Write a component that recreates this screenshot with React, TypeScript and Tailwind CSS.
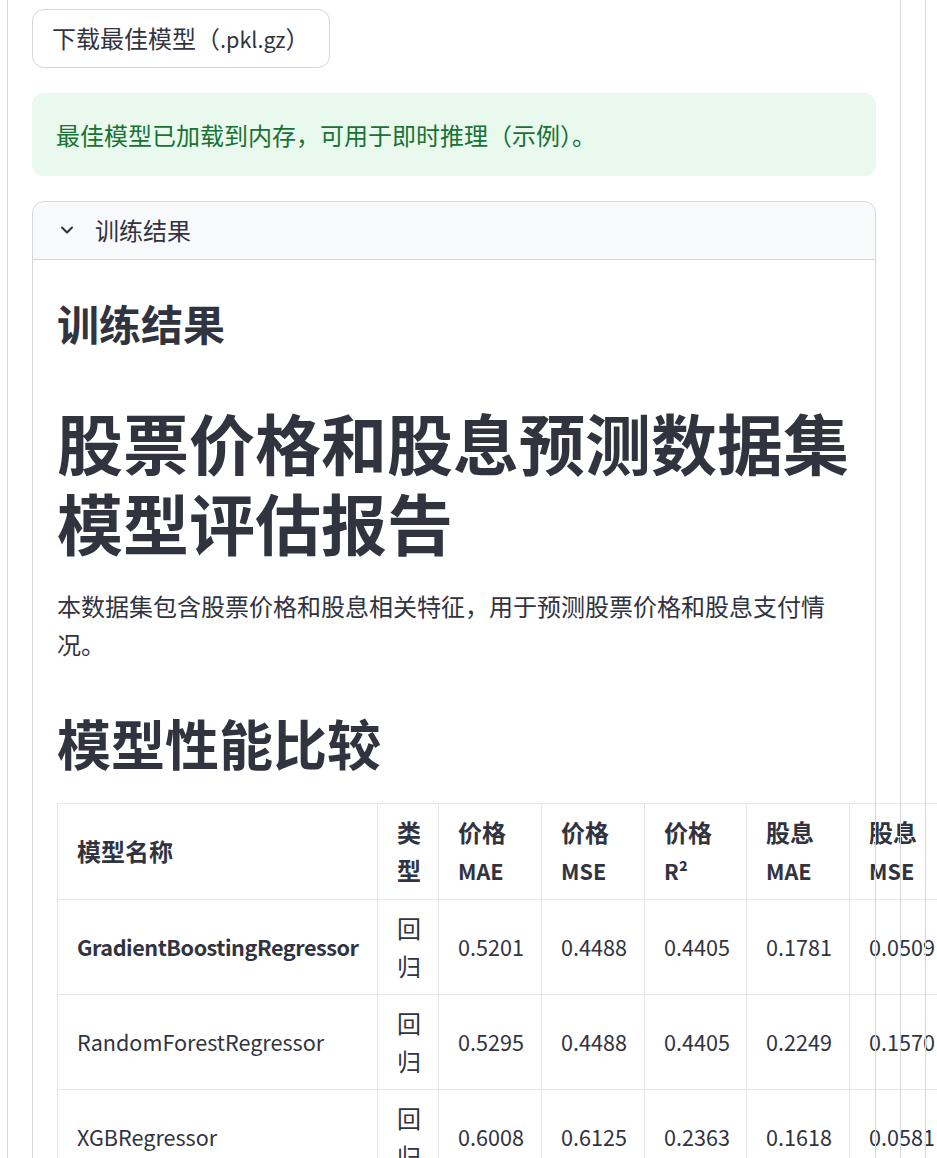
import React from "react";
import { ChevronDown } from "lucide-react";

interface ModelRow {
	name: string;
	kind: string;
	priceMae: string;
	priceMse: string;
	priceR2: string;
	divMae: string;
	divMse: string;
	divR2: string;
	best?: boolean;
}

const rows: ModelRow[] = [
	{ name: "GradientBoostingRegressor", kind: "回归", priceMae: "0.5201", priceMse: "0.4488", priceR2: "0.4405", divMae: "0.1781", divMse: "0.0509", divR2: "0.8123", best: true },
	{ name: "RandomForestRegressor", kind: "回归", priceMae: "0.5295", priceMse: "0.4488", priceR2: "0.4405", divMae: "0.2249", divMse: "0.1570", divR2: "0.4210" },
	{ name: "XGBRegressor", kind: "回归", priceMae: "0.6008", priceMse: "0.6125", priceR2: "0.2363", divMae: "0.1618", divMse: "0.0581", divR2: "0.7854" },
];

// latin glyphs of the CJK face run wide, so shrink them to match the source
function Lat({ children }: { children: React.ReactNode }) {
	return <span className="text-[21.6px]">{children}</span>;
}

const th = "border border-[#e6e6e9] px-[19px] py-[9px] text-left align-middle font-bold";
const td = "border border-[#e6e6e9] px-[19px] py-[9px] text-left align-middle";
const num = `${td} text-[21.6px]`;

function ResultsTable() {
	return (
		<table className="mt-[28px] w-[1000px] table-fixed border-collapse text-[24px] leading-[38px]">
			<colgroup>
				<col className="w-[320px]" />
				<col className="w-[61px]" />
				<col className="w-[103px]" />
				<col className="w-[103px]" />
				<col className="w-[102px]" />
				<col className="w-[103px]" />
				<col className="w-[103px]" />
				<col className="w-[105px]" />
			</colgroup>
			<thead>
				<tr>
					<th className={th}>模型名称</th>
					<th className={th}>类型</th>
					<th className={th}>价格 <Lat>MAE</Lat></th>
					<th className={th}>价格 <Lat>MSE</Lat></th>
					<th className={th}>价格 <Lat>R²</Lat></th>
					<th className={th}>股息 <Lat>MAE</Lat></th>
					<th className={th}>股息 <Lat>MSE</Lat></th>
					<th className={th}>股息 <Lat>R²</Lat></th>
				</tr>
			</thead>
			<tbody>
				{rows.map((r) => (
					<tr key={r.name}>
						<td className={r.best ? `${num} font-semibold tracking-[-0.45px]` : num}>{r.name}</td>
						<td className={td}>{r.kind}</td>
						<td className={num}>{r.priceMae}</td>
						<td className={num}>{r.priceMse}</td>
						<td className={num}>{r.priceR2}</td>
						<td className={num}>{r.divMae}</td>
						<td className={num}>{r.divMse}</td>
						<td className={num}>{r.divR2}</td>
					</tr>
				))}
			</tbody>
		</table>
	);
}

export default function App() {
	return (
		<div className="relative min-h-[1158px] overflow-hidden bg-white font-['Noto_Sans_CJK_SC','Noto_Sans',sans-serif] text-[#31333f]">
			<div className="ml-[8px] w-[892px] px-6 pt-[9px] pb-10">
				<button className="block rounded-xl border border-[#d5d6d9] bg-white px-[19px] py-[9px] text-[24px] leading-[38px]">
					下载最佳模型（<Lat>.pkl.gz</Lat>）
				</button>

				<div className="mt-[25px] rounded-xl bg-[#e9f9ee] px-6 py-[23.5px] text-[24px] leading-[36px] text-[#177233]">
					最佳模型已加载到内存，可用于即时推理（示例）。
				</div>

				<div className="relative mt-[25px] p-px">
					<div className="flex items-center gap-[18px] rounded-t-xl border-b border-[#d6d6d9] bg-[#f8f9fb] px-6 pt-[9px] pb-[10px] text-[24px] leading-[38px]">
						<ChevronDown size={20} strokeWidth={2.5} />
						<span>训练结果</span>
					</div>
					<div className="px-6 pt-[38px] pb-6">
						<h3 className="text-[42px] leading-[50px] font-bold">训练结果</h3>
						<h1 className="mt-[53px] text-[66px] leading-[80px] font-bold">
							股票价格和股息预测数据集模型评估报告
						</h1>
						<p className="mt-[26px] text-[24px] leading-[38.4px]">
							本数据集包含股票价格和股息相关特征，用于预测股票价格和股息支付情况。
						</p>
						<h2 className="mt-[46px] text-[54px] leading-[65px] font-bold">模型性能比较</h2>
						<ResultsTable />
					</div>
					<div className="pointer-events-none absolute inset-0 rounded-xl border border-[#d6d6d9]" />
				</div>
			</div>

			<div className="pointer-events-none absolute inset-y-0 left-[7px] w-px bg-[#d6d6d9]" />
			<div className="pointer-events-none absolute inset-y-0 left-[900px] w-px bg-[#d6d6d9]" />
			<div className="pointer-events-none absolute inset-y-0 left-[925px] w-px bg-[#d6d6d9]" />
		</div>
	);
}
